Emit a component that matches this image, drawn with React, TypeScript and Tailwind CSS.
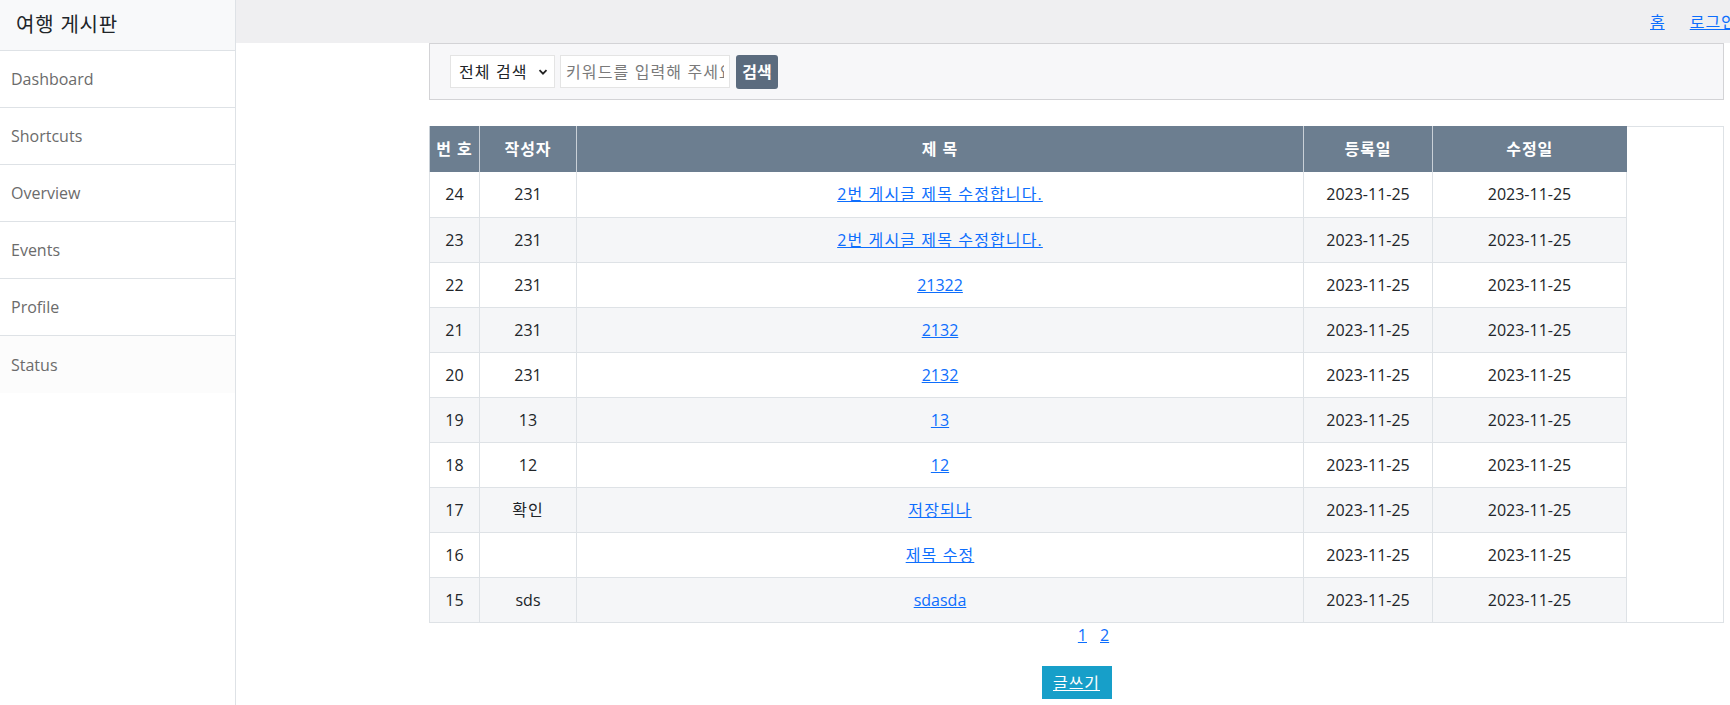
import React from "react";

const rows = [
  { no: 24, writer: "231", title: "2번 게시글 제목 수정합니다." },
  { no: 23, writer: "231", title: "2번 게시글 제목 수정합니다." },
  { no: 22, writer: "231", title: "21322" },
  { no: 21, writer: "231", title: "2132" },
  { no: 20, writer: "231", title: "2132" },
  { no: 19, writer: "13", title: "13" },
  { no: 18, writer: "12", title: "12" },
  { no: 17, writer: "확인", title: "저장되나" },
  { no: 16, writer: "", title: "제목 수정" },
  { no: 15, writer: "sds", title: "sdasda" },
];

const menu = ["Dashboard", "Shortcuts", "Overview", "Events", "Profile", "Status"];

// korean strings render a bit wider in the original (Malgun Gothic)
const isKo = (s: string) => /[가-힣]/.test(s);

export default function App() {
  return (
    <div className="flex min-h-[705px] bg-white text-[#212529] font-['Open_Sans','Noto_Sans_CJK_KR',sans-serif] text-base">
      {/* sidebar */}
      <aside className="w-[236px] shrink-0 border-r border-[#dee2e6]">
        <div className="h-[51px] bg-[#f8f9fa] border-b border-[#dee2e6] pl-4 flex items-center text-xl tracking-[0.04em]">
          여행 게시판
        </div>
        <ul>
          {menu.map((m, i) => (
            <li
              key={m}
              className={`h-[57px] pl-[11px] flex items-center text-[#6b6b6b] ${
                i < menu.length - 1 ? "border-b border-[#dee2e6]" : "bg-[#fcfcfc]"
              }`}
            >
              {m}
            </li>
          ))}
        </ul>
      </aside>

      <main className="flex-1 min-w-0 overflow-hidden">
        <nav className="h-[43px] bg-[#efeff1] flex items-center pl-[1414px] gap-[25px] whitespace-nowrap">
          <a href="#" className="text-[#0d6efd] underline">홈</a>
          <a href="#" className="text-[#0d6efd] underline tracking-[0.06em]">로그인</a>
        </nav>

        <div className="ml-[193px] w-[1295px]">
          {/* search bar */}
          <div className="h-[57px] bg-[#f7f7f9] border border-[#d3d3d6] flex items-center pl-5 gap-[5px]">
            <div className="h-[33px] w-[105px] bg-white border border-[#e4e4e4] flex items-center justify-between pl-2 pr-[6px]">
              <span className="tracking-[0.07em] whitespace-nowrap">전체 검색</span>
              <svg width="10" height="10" viewBox="0 0 10 10" className="shrink-0">
                <path d="M1.5 3.2 L5 6.7 L8.5 3.2" fill="none" stroke="#222" strokeWidth="1.8" />
              </svg>
            </div>
            <input
              className="h-[33px] w-[170px] bg-white border border-[#e4e4e4] px-[5px] outline-none tracking-[0.07em] placeholder:text-[#7a7a7a]"
              placeholder="키워드를 입력해 주세요"
            />
            <button className="h-[34px] w-[42px] ml-px rounded-[3px] bg-[#5b6b7e] text-white font-bold">
              검색
            </button>
          </div>

          {/* board table */}
          <div className="mt-[26px] border-t border-r border-b border-[#dee2e6]">
            <table className="w-[1197px] border-collapse -mt-px table-fixed">
              <colgroup>
                <col className="w-[50px]" />
                <col className="w-[97px]" />
                <col className="w-[727px]" />
                <col className="w-[129px]" />
                <col className="w-[194px]" />
              </colgroup>
              <thead>
                <tr className="h-[46px] bg-[#6c7e90] text-white font-bold tracking-[0.06em]">
                  <th className="border-x border-[#c9d0d7] whitespace-nowrap">번 호</th>
                  <th className="border-x border-[#c9d0d7]">작성자</th>
                  <th className="border-x border-[#c9d0d7]">제 목</th>
                  <th className="border-x border-[#c9d0d7]">등록일</th>
                  <th className="border-l border-[#c9d0d7]">수정일</th>
                </tr>
              </thead>
              <tbody>
                {rows.map((r, i) => (
                  <tr key={r.no} className={`h-[45px] text-center ${i % 2 ? "bg-[#f5f6f8]" : "bg-white"}`}>
                    <td className={`border-l border-[#dee2e6] ${i ? "border-t" : ""}`}>{r.no}</td>
                    <td className={`border-l border-[#dee2e6] ${i ? "border-t" : ""}`}>
                      <span className={isKo(r.writer) ? "tracking-[0.07em]" : ""}>{r.writer}</span>
                    </td>
                    <td className={`border-l border-[#dee2e6] ${i ? "border-t" : ""}`}>
                      <a href="#" className={`text-[#0d6efd] underline ${isKo(r.title) ? "tracking-[0.07em]" : ""}`}>
                        {r.title}
                      </a>
                    </td>
                    <td className={`border-l border-[#dee2e6] ${i ? "border-t" : ""}`}>2023-11-25</td>
                    <td className={`border-x border-[#dee2e6] ${i ? "border-t" : ""}`}>2023-11-25</td>
                  </tr>
                ))}
              </tbody>
            </table>
          </div>

          {/* pagination */}
          <div className="flex justify-center pl-[34px] gap-[13px] h-6 leading-6">
            <a href="#" className="text-[#0d6efd] underline">1</a>
            <a href="#" className="text-[#0d6efd] underline">2</a>
          </div>

          <div className="flex justify-center mt-[19px]">
            <button className="w-[70px] h-[33px] bg-[#179fc9] text-white underline tracking-[0.06em]">글쓰기</button>
          </div>
        </div>
      </main>
    </div>
  );
}
